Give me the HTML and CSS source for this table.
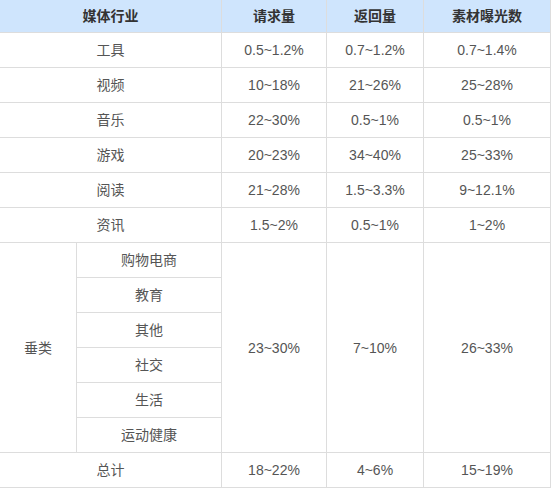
FILE: index.html
```html
<!DOCTYPE html>
<html lang="zh-CN">
<head>
<meta charset="utf-8">
<title>媒体行业数据</title>
<link rel="stylesheet" href="styles.css">
</head>
<body>
<div class="grid">
  <div class="cell head span2">媒体行业</div>
  <div class="cell head">请求量</div>
  <div class="cell head">返回量</div>
  <div class="cell head">素材曝光数</div>

  <div class="cell span2">工具</div>
  <div class="cell">0.5~1.2%</div>
  <div class="cell">0.7~1.2%</div>
  <div class="cell">0.7~1.4%</div>

  <div class="cell span2">视频</div>
  <div class="cell">10~18%</div>
  <div class="cell">21~26%</div>
  <div class="cell">25~28%</div>

  <div class="cell span2">音乐</div>
  <div class="cell">22~30%</div>
  <div class="cell">0.5~1%</div>
  <div class="cell">0.5~1%</div>

  <div class="cell span2">游戏</div>
  <div class="cell">20~23%</div>
  <div class="cell">34~40%</div>
  <div class="cell">25~33%</div>

  <div class="cell span2">阅读</div>
  <div class="cell">21~28%</div>
  <div class="cell">1.5~3.3%</div>
  <div class="cell">9~12.1%</div>

  <div class="cell span2">资讯</div>
  <div class="cell">1.5~2%</div>
  <div class="cell">0.5~1%</div>
  <div class="cell">1~2%</div>

  <div class="cell vspan c1">垂类</div>
  <div class="cell c2">购物电商</div>
  <div class="cell vspan c3">23~30%</div>
  <div class="cell vspan c4">7~10%</div>
  <div class="cell vspan c5">26~33%</div>
  <div class="cell c2">教育</div>
  <div class="cell c2">其他</div>
  <div class="cell c2">社交</div>
  <div class="cell c2">生活</div>
  <div class="cell c2">运动健康</div>

  <div class="cell span2">总计</div>
  <div class="cell">18~22%</div>
  <div class="cell">4~6%</div>
  <div class="cell">15~19%</div>
</div>
</body>
</html>
```

FILE: styles.css
```css
html, body {
  margin: 0;
  padding: 0;
  background: #ffffff;
}

body {
  font-family: "Liberation Sans", "Noto Sans CJK SC", sans-serif;
  font-size: 14px;
  color: #555555;
}

.grid {
  display: grid;
  grid-template-columns: 76px 144px 104px 96px 126px;
  grid-template-rows: 32px repeat(13, 34px);
  gap: 1px;
  background: #dddddd;
  border: 1px solid #dddddd;
  width: max-content;
  margin: -1px 0 0 -1px;
}

.cell {
  background: #ffffff;
  display: flex;
  align-items: center;
  justify-content: center;
  line-height: 1;
}

.head {
  background: #cfe5fd;
  color: #333333;
  font-weight: bold;
}

.span2 {
  grid-column: span 2;
}

.vspan {
  grid-row: 8 / span 6;
}

.c1 { grid-column: 1; }
.c2 { grid-column: 2; }
.c3 { grid-column: 3; }
.c4 { grid-column: 4; }
.c5 { grid-column: 5; }
```
